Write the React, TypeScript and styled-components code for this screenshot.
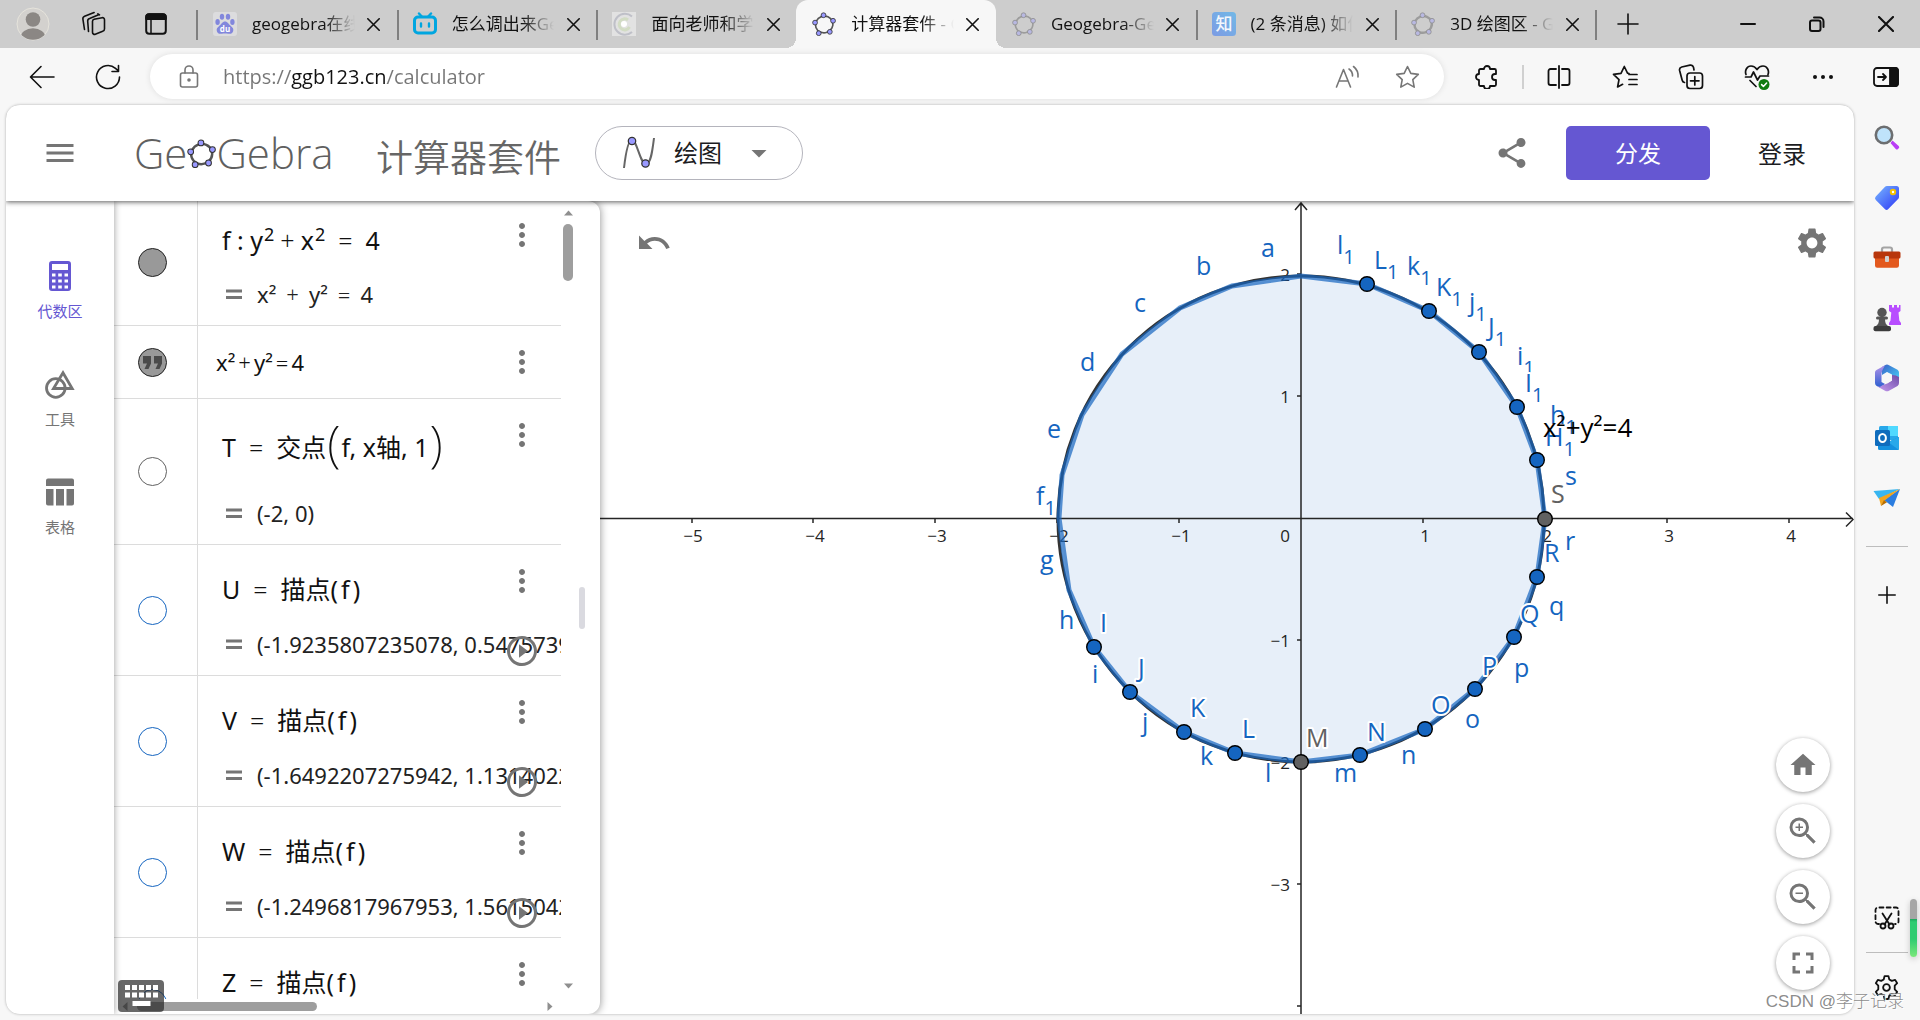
import React from "react";
import styled, { createGlobalStyle, css } from "styled-components";
import {
  MdArrowDropDown,
  MdFullscreen,
  MdHome,
  MdMenu,
  MdMoreVert,
  MdPlayCircleOutline,
  MdSettings,
  MdShare,
  MdUndo,
  MdZoomIn,
  MdZoomOut,
} from "react-icons/md";

const UI = `"Open Sans", "Noto Sans CJK SC", sans-serif`;
const MATH = `"Noto Sans", "Noto Sans CJK SC", sans-serif`;
const GREY = "#757575";
const PURPLE = "#6557d2";
const BLUE = "#1565c0";

const GlobalStyle = createGlobalStyle`
  *, *::before, *::after { box-sizing: border-box; }
  body { margin: 0; font-family: ${UI}; color: #111; background: #f7f7f7; overflow: hidden; }
  button { border: 0; padding: 0; background: none; color: inherit; font: inherit; cursor: pointer; }
  svg { display: block; flex: none; }
`;

const Window = styled.div`
  position: relative;
  display: flex;
  flex-direction: column;
  height: 100vh;
`;

const IconButton = styled.button<{ $w?: number }>`
  display: flex;
  align-items: center;
  justify-content: center;
  flex: none;
  width: ${(p) => p.$w ?? 66}px;
  height: 48px;
`;

/* ---------- tab strip ---------- */

const TabStrip = styled.header`
  display: flex;
  align-items: center;
  height: 48px;
  flex: none;
  background: #cdcdcd;
`;

const Tabs = styled.div`
  display: flex;
  flex: 0 1 1398px;
  min-width: 0;
  margin-left: 5px;
`;

const Tab = styled.div<{ $active?: boolean; $divider?: boolean; $first?: boolean }>`
  position: relative;
  display: flex;
  align-items: center;
  flex: 1 1 0;
  min-width: 0;
  height: 48px;
  padding: 0 8px 0 16px;
  ${(p) =>
    p.$first &&
    css`
      &::before {
        content: "";
        position: absolute;
        left: -1px;
        top: 10px;
        width: 2px;
        height: 30px;
        background: #808080;
      }
    `}
  ${(p) =>
    p.$divider &&
    css`
      &::after {
        content: "";
        position: absolute;
        right: -2px;
        top: 10px;
        width: 2px;
        height: 30px;
        background: #808080;
      }
    `}
  ${(p) =>
    p.$active &&
    css`
      background: #f7f7f7;
      border-radius: 12px 12px 0 0;
      &::before,
      &::after {
        content: "";
        position: absolute;
        bottom: 0;
        width: 10px;
        height: 10px;
      }
      &::before {
        right: 100%;
        background: radial-gradient(circle at 0 0, transparent 10px, #f7f7f7 10px);
      }
      &::after {
        left: 100%;
        background: radial-gradient(circle at 100% 0, transparent 10px, #f7f7f7 10px);
      }
    `}
`;

const TabTitle = styled.span`
  flex: 1;
  min-width: 0;
  margin: 0 4px 0 15px;
  overflow: hidden;
  white-space: nowrap;
  font-size: 17px;
  line-height: 26px;
  mask-image: linear-gradient(to right, #000 calc(100% - 32px), transparent);
`;

const WindowControls = styled.div`
  display: flex;
  margin-left: auto;
`;

/* ---------- address row ---------- */

const Toolbar = styled.div`
  display: flex;
  align-items: center;
  flex: none;
  height: 57px;
  padding: 0 4px 0 9px;
`;

const AddressBar = styled.label`
  display: flex;
  align-items: center;
  flex: 1;
  min-width: 0;
  height: 45px;
  margin: 0 10px 0 9px;
  padding: 0 7px 0 29px;
  border-radius: 23px;
  background: #fff;
  box-shadow: 0 0 6px rgba(0, 0, 0, 0.1);
`;

const UrlInput = styled.input`
  flex: 1;
  min-width: 0;
  height: 32px;
  margin-left: 24px;
  padding: 0;
  border: 0;
  outline: 0;
  font-family: ${UI};
  font-size: 20px;
  color: transparent;
  background: linear-gradient(to right, #767676 68px, #111 68px, #111 164px, #767676 164px);
  background-clip: text;
  -webkit-background-clip: text;
`;

const ToolDivider = styled.span`
  width: 2px;
  height: 24px;
  margin: 0 2px;
  background: #d0d0d0;
`;

/* ---------- page body ---------- */

const Main = styled.div`
  display: flex;
  flex: 1;
  min-height: 0;
`;

const Card = styled.div`
  display: flex;
  flex-direction: column;
  flex: 1;
  min-width: 0;
  margin: 0 0 6px 6px;
  border-radius: 14px;
  overflow: hidden;
  background: #fff;
  box-shadow: 0 0 3px rgba(0, 0, 0, 0.3);
`;

const AppHeader = styled.div`
  position: relative;
  z-index: 3;
  display: flex;
  align-items: center;
  flex: none;
  height: 96px;
  padding: 0 48px 0 36px;
  background: #fff;
  box-shadow: 0 1px 5px rgba(0, 0, 0, 0.65);
`;

const PlainButton = styled.button`
  flex: none;
  color: ${GREY};
`;

const Logo = styled.div`
  display: flex;
  align-items: center;
  width: 208px;
  margin: 0 34px 0 56px;
  flex: none;
  font-family: "Open Sans", sans-serif;
  font-weight: 300;
  font-size: 42px;
  line-height: 48px;
  color: #606060;
`;

const SuiteName = styled.h1`
  margin: 6px 34px 0 0;
  font-family: "Noto Sans CJK SC", sans-serif;
  font-weight: 350;
  font-size: 37px;
  line-height: 48px;
  color: #666;
  white-space: nowrap;
`;

const ModePicker = styled.label`
  position: relative;
  display: flex;
  align-items: center;
  width: 208px;
  height: 54px;
  flex: none;
  padding: 0 25px 0 26px;
  border: 1px solid #b4b4bc;
  border-radius: 27px;
  color: ${GREY};
`;

const ModeSelect = styled.select`
  appearance: none;
  flex: 1;
  min-width: 0;
  margin-left: 18px;
  padding: 0;
  border: 0;
  outline: 0;
  background: transparent;
  font-family: ${UI};
  font-size: 24px;
  line-height: 36px;
  color: #1c1c1f;
`;

const HeaderActions = styled.div`
  display: flex;
  align-items: center;
  margin-left: auto;
`;

const AssignButton = styled.button`
  width: 144px;
  height: 54px;
  margin: 0 48px 0 36px;
  padding-bottom: 2px;
  border-radius: 5px;
  background: ${PURPLE};
  color: #fff;
  font-size: 23px;
`;

const SignIn = styled.button`
  padding-bottom: 2px;
  font-size: 24px;
  color: #1c1c1f;
`;

const Workspace = styled.div`
  display: flex;
  flex: 1;
  min-height: 0;
`;

const NavRail = styled.nav`
  position: relative;
  z-index: 2;
  display: flex;
  flex-direction: column;
  flex: none;
  width: 108px;
  padding-top: 45px;
  background: #fff;
  box-shadow: 0 0 7px rgba(0, 0, 0, 0.4);
`;

const NavItem = styled.button<{ $active?: boolean }>`
  display: flex;
  flex-direction: column;
  align-items: center;
  gap: 8px;
  height: 108px;
  padding-top: 15px;
  font-size: 15px;
  line-height: 24px;
  color: ${(p) => (p.$active ? PURPLE : GREY)};
`;

/* ---------- algebra view ---------- */

const AlgebraPanel = styled.section`
  position: relative;
  z-index: 1;
  display: flex;
  flex: none;
  width: 486px;
  background: #fff;
  border-radius: 0 12px 12px 0;
  box-shadow: 0 0 8px rgba(0, 0, 0, 0.45);
`;

const ListColumn = styled.div`
  position: relative;
  display: flex;
  flex-direction: column;
  width: 447px;
`;

const ListViewport = styled.div`
  flex: 1;
  min-height: 0;
  overflow: hidden;
`;

const List = styled.div`
  margin-top: -2px;
`;

const Row = styled.div`
  position: relative;
  display: flex;
  border-bottom: 1px solid #dcdcdc;
`;

const MarkerCell = styled.div`
  display: flex;
  align-items: center;
  justify-content: center;
  flex: none;
  width: 84px;
  padding-right: 6px;
  border-right: 1px solid #dcdcdc;
`;

const Marker = styled.button<{ $fill: string; $line: string }>`
  display: flex;
  align-items: center;
  justify-content: center;
  width: 29px;
  height: 29px;
  border: 1px solid ${(p) => p.$line};
  border-radius: 50%;
  background: ${(p) => p.$fill};
`;

const Entry = styled.div<{ $top: number; $left?: number; $single?: boolean }>`
  display: flex;
  flex-direction: column;
  gap: ${(p) => (p.$top === 28 ? 23 : 22)}px;
  flex: 1;
  min-width: 0;
  overflow: hidden;
  padding: ${(p) => p.$top}px 0 ${(p) => (p.$single ? 20 : 15)}px ${(p) => p.$left ?? 24}px;
  font-family: ${MATH};
  color: #111;
  white-space: nowrap;
`;

const Formula = styled.div<{ $tall?: boolean }>`
  display: flex;
  align-items: center;
  height: ${(p) => (p.$tall ? 56 : 32)}px;
  font-size: 25px;
  line-height: 32px;
  white-space: pre;

  sup {
    font-size: 18px;
    line-height: 0;
    vertical-align: 9px;
    margin-left: 1px;
  }
`;

const Op = styled.span<{ $gap?: number }>`
  margin: 0 ${(p) => p.$gap ?? 13}px;
  font-weight: 300;
`;

const Arg = styled.span`
  margin: 0 3px;
`;

const TallParen = styled.span`
  margin: 0 1px 8px;
  font-weight: 200;
  font-size: 50px;
  line-height: 48px;
`;

const Result = styled.div`
  display: flex;
  align-items: center;
  padding-left: 4px;
  font-size: 22px;
  line-height: 32px;
  color: #222;

  svg { margin-right: 15px; }
`;

const PlainText = styled.div`
  font-size: 22px;
  line-height: 32px;
`;

const MoreButton = styled.button`
  position: absolute;
  top: 18px;
  right: 21px;
  color: ${GREY};
`;

const PlayButton = styled.button`
  position: absolute;
  bottom: 6px;
  right: 21px;
  color: ${GREY};
`;

const HScroll = styled.div`
  display: flex;
  align-items: center;
  flex: none;
  height: 15px;
  padding: 0 7px;
`;

const HThumb = styled.span`
  width: 180px;
  height: 9px;
  margin: 0 auto 0 7px;
  border-radius: 5px;
  background: #9e9e9e;
`;

const VScroll = styled.div`
  display: flex;
  flex-direction: column;
  align-items: center;
  width: 14px;
  padding: 8px 0 24px;
`;

const VThumb = styled.span`
  width: 10px;
  height: 57px;
  margin: 6px 0 auto;
  border-radius: 5px;
  background: #9e9e9e;
`;

const DragHandle = styled.span`
  align-self: center;
  width: 6px;
  height: 42px;
  margin-left: 4px;
  border-radius: 3px;
  background: #dadae0;
`;

const KeyboardButton = styled.button`
  position: absolute;
  left: 4px;
  bottom: 2px;
  display: flex;
  align-items: center;
  justify-content: center;
  width: 46px;
  height: 32px;
  border-radius: 4px;
  background: rgba(40, 40, 40, 0.7);
`;

/* ---------- graphics view ---------- */

const GraphPane = styled.section`
  position: relative;
  flex: 1;
  min-width: 0;
`;

const Plot = styled.svg`
  width: 100%;
  height: 100%;
  font-family: ${UI};
`;

const CornerButton = styled.button<{ $side: "left" | "right" }>`
  position: absolute;
  top: 24px;
  ${(p) => (p.$side === "left" ? "left: 36px" : "right: 24px")};
  color: ${GREY};
`;

const ZoomStack = styled.div`
  position: absolute;
  right: 24px;
  bottom: 24px;
  display: flex;
  flex-direction: column;
  gap: 12px;
`;

const RoundButton = styled.button`
  display: flex;
  align-items: center;
  justify-content: center;
  width: 54px;
  height: 54px;
  border-radius: 50%;
  background: #fff;
  color: ${GREY};
  box-shadow: 0 1px 4px rgba(0, 0, 0, 0.4);
`;

/* ---------- browser sidebar ---------- */

const EdgeBar = styled.aside`
  position: relative;
  display: flex;
  flex-direction: column;
  align-items: center;
  flex: none;
  width: 66px;
  padding: 3px 1px 3px 0;
`;

const EdgeItem = styled.button`
  display: flex;
  align-items: center;
  justify-content: center;
  width: 60px;
  height: 60px;
`;

const EdgeRule = styled.hr`
  width: 42px;
  height: 1px;
  margin: 18px 0;
  border: 0;
  background: #bdbdbd;
`;

const EdgeBottom = styled.div`
  display: flex;
  flex-direction: column;
  align-items: center;
  margin-top: auto;

  hr { margin: 4px 0; }
`;

const Meter = styled.span`
  position: absolute;
  right: 3px;
  bottom: 63px;
  width: 7px;
  height: 58px;
  border-radius: 4px;
  background: linear-gradient(#a6a6a6 20px, #1aa85c 20px, #2ecc71 23px, #2ecc71 40px, #7be87b);
  box-shadow: 0 2px 6px rgba(0, 0, 0, 0.2);
`;

const Watermark = styled.span`
  position: absolute;
  right: 16px;
  bottom: 6px;
  z-index: 5;
  font-family: "Liberation Sans", "Noto Sans CJK SC", sans-serif;
  font-weight: 300;
  font-size: 17px;
  line-height: 24px;
  color: rgba(125, 125, 125, 0.9);
  text-shadow: 1px 1px 0 #fff;
  pointer-events: none;
`;

/* ---------- icons ---------- */

const line = { fill: "none", stroke: "currentColor", strokeWidth: 1.6, strokeLinecap: "round", strokeLinejoin: "round" } as const;

const GgbIcon = ({ size = 26, faded = false, w = 1.8 }: { size?: number; faded?: boolean; w?: number }) => (
  <svg width={size} height={size} viewBox="0 0 26 26" opacity={faded ? 0.4 : 1}>
    <ellipse cx="13" cy="13.5" rx="9.5" ry="9" fill="none" stroke="#555" strokeWidth={w} transform="rotate(-20 13 13)" />
    {[[12.5, 3.5], [22.8, 9.5], [19.3, 21.5], [7.3, 23], [3.3, 11.5]].map(([x, y]) => (
      <circle key={x} cx={x} cy={y} r="2.6" fill="#9999ff" stroke="#333" strokeWidth="0.9" />
    ))}
  </svg>
);

const BaiduIcon = () => (
  <svg width="24" height="24" viewBox="0 0 24 24">
    <rect width="24" height="24" rx="3" fill="#dcdcde" />
    <g fill="#8287dc">
      <ellipse cx="4.6" cy="10" rx="2.2" ry="2.9" />
      <ellipse cx="9" cy="4.8" rx="2.2" ry="3" />
      <ellipse cx="15" cy="4.8" rx="2.2" ry="3" />
      <ellipse cx="19.4" cy="10" rx="2.2" ry="2.9" />
      <path d="M12 9.5c2.6 0 3.6 2.6 5.600 4.300 2.400 2 3 3.200 2.600 5.200-.5 2.600-2.800 3-5 2.700-2.200-.3-4.200-.3-6.400 0-2.200.3-4.500-.1-5-2.700-.4-2 .2-3.200 2.600-5.200C8.400 12.100 9.400 9.500 12 9.500z" />
    </g>
    <text x="12" y="20" fontSize="8" fontWeight="700" textAnchor="middle" fill="#fff" fontFamily="Open Sans">du</text>
  </svg>
);

const BiliIcon = () => (
  <svg width="24" height="24" viewBox="0 0 24 24" fill="none" stroke="#00a6e0" strokeLinecap="round">
    <rect x="1.500" y="5" width="21" height="16" rx="3.500" strokeWidth="3" />
    <path d="M6 1.500l3 3.300M18 1.500l-3 3.300M8 11.500v3M16 11.500v3" strokeWidth="2.400" />
  </svg>
);

const SwirlIcon = () => (
  <svg width="24" height="24" viewBox="0 0 24 24" fill="none">
    <rect width="24" height="24" fill="#e2e2e2" />
    <path d="M20 4.500A10.500 10.500 0 1 0 20 20" stroke="#bfc0c8" strokeWidth="2" />
    <path d="M16 8a5.500 5.500 0 1 0 1.500 7" stroke="#d2dcc4" strokeWidth="3" />
    <circle cx="12" cy="12" r="3" fill="#fff" />
  </svg>
);

const ZhihuIcon = () => (
  <svg width="24" height="24" viewBox="0 0 24 24">
    <defs>
      <linearGradient id="zhihu" x1="0" y1="1" x2="1" y2="0">
        <stop offset="0" stopColor="#7c9be4" />
        <stop offset="1" stopColor="#72b8e6" />
      </linearGradient>
    </defs>
    <rect width="24" height="24" rx="3.500" fill="url(#zhihu)" />
    <text x="12" y="18" fontSize="17" fontWeight="500" textAnchor="middle" fill="#f4f7fc" fontFamily="Noto Sans CJK SC">知</text>
  </svg>
);

const CloseIcon = ({ size = 13, w = 1.6 }: { size?: number; w?: number }) => (
  <svg width={size} height={size} viewBox="0 0 13 13" {...line} strokeWidth={w}>
    <path d="M.8.8l11.400 11.400M12.200.8L.8 12.200" />
  </svg>
);

const ProfileIcon = () => (
  <svg width="34" height="34" viewBox="0 0 34 34">
    <defs><clipPath id="face"><circle cx="17" cy="17" r="15.800" /></clipPath></defs>
    <circle cx="17" cy="17" r="16" fill="#d3d1ce" stroke="#e6e4dc" />
    <g fill="#8b8784" clipPath="url(#face)">
      <circle cx="17" cy="12.500" r="7.300" />
      <ellipse cx="17" cy="31" rx="12.500" ry="9.800" />
    </g>
  </svg>
);

const WorkspacesIcon = () => (
  <svg width="26" height="26" viewBox="0 0 26 26" {...line}>
    <path d="M12.500 10.200a2 2 0 0 1 1.600-1.900l8-1.600a2 2 0 0 1 2.400 2V18a2.500 2.500 0 0 1-1.800 2.300l-7.400 2.900a2 2 0 0 1-2.800-1.900z" />
    <path d="M8.500 20.500l-.8-10.300c-.1-1.500.6-2.400 1.900-2.800l9-3.600M4.500 18.500L2.900 8.200c-.2-1.400.5-2.400 1.700-2.900l9.500-3.800M19.500 3.900L17.900 2.800" />
  </svg>
);

const VerticalTabsIcon = () => (
  <svg width="22" height="22" viewBox="0 0 22 22" {...line} strokeWidth={2}>
    <rect x="1.200" y="1.200" width="19.600" height="19.600" rx="3" />
    <path d="M1.200 4a3 3 0 0 1 3-2.800h13.600a3 3 0 0 1 3 2.800v2H1.200z" fill="currentColor" />
    <path d="M6 7v13" strokeWidth={1.500} />
  </svg>
);

const CalculatorIcon = () => (
  <svg width="22" height="30" viewBox="0 0 22 30" fill="currentColor">
    <path fillRule="evenodd" d="M3 0h16a3 3 0 0 1 3 3v24a3 3 0 0 1-3 3H3a3 3 0 0 1-3-3V3a3 3 0 0 1 3-3zm0 3v6h16V3zM3 12.500v3h3.500v-3zm6.200 0v3h3.600v-3zm6.300 0v3H19v-3zM3 18.500v3h3.500v-3zm6.200 0v3h3.600v-3zm6.300 0v3H19v-3zM3 24.500v3h3.500v-3zm6.200 0v3h3.600v-3zm6.300 0v3H19v-3z" />
  </svg>
);

const ToolsIcon = () => (
  <svg width="30" height="30" viewBox="0 0 30 30" fill="none" stroke="currentColor" strokeWidth="2.800">
    <circle cx="10.800" cy="19" r="9.300" />
    <path d="M18 3.800L8.500 19.500h18.700z" />
  </svg>
);

const TableIcon = () => (
  <svg width="30" height="30" viewBox="0 0 30 30" fill="currentColor">
    <path d="M3 1.500h24a2 2 0 0 1 2 2V9H1V3.500a2 2 0 0 1 2-2zM1 12h7.500v16.500H3a2 2 0 0 1-2-2zM11 12h8v16.500h-8zM21.500 12H29v14.500a2 2 0 0 1-2 2h-5.500z" />
  </svg>
);

const EqualsIcon = () => (
  <svg width="16" height="12" viewBox="0 0 16 12" fill={GREY}>
    <path d="M0 1.500h16v3H0zM0 8h16v3H0z" />
  </svg>
);

const QuoteIcon = () => (
  <svg width="19" height="13" viewBox="0 0 19 13" fill="#4a4a4a">
    <path d="M0 0h8v7.500L5.500 13h-4L4 7.500H0zM11 0h8v7.500L16.500 13h-4L15 7.500h-4z" />
  </svg>
);

const KeyboardIcon = () => (
  <svg width="33" height="22" viewBox="0 0 33 22" fill="#fff">
    {[0, 7, 14, 21, 28].map((x) => (
      <React.Fragment key={x}>
        <rect x={x} y="0" width="5" height="5" />
        <rect x={x} y="7.500" width="5" height="5" />
      </React.Fragment>
    ))}
    <rect x="7.500" y="16" width="18" height="5" />
  </svg>
);

const Caret = ({ d }: { d: string }) => (
  <svg width="9" height="9" viewBox="0 0 9 9" fill="#8f8f8f">
    <path d={d} />
  </svg>
);

const EdgeSearch = () => (
  <svg width="26" height="26" viewBox="0 0 26 26">
    <path d="M16.500 18l2-2.500 6.200 5.500a1.600 1.600 0 0 1 0 2.300l-.7.7a1.600 1.600 0 0 1-2.300 0z" fill="#b93df5" />
    <circle cx="10" cy="10" r="8.200" fill="#bfe3fb" stroke="#6c6e70" strokeWidth="2.600" />
  </svg>
);

const EdgeTag = () => (
  <svg width="26" height="26" viewBox="0 0 26 26">
    <defs><linearGradient id="tag" x1="0" y1="0" x2="1" y2="1"><stop offset="0" stopColor="#79b8ff" /><stop offset="1" stopColor="#2b35f5" /></linearGradient></defs>
    <path d="M13 1h9.500A2.500 2.500 0 0 1 25 3.500V12a3 3 0 0 1-.9 2.100l-9.800 10a2.500 2.500 0 0 1-3.500 0l-9-9a2.500 2.500 0 0 1 0-3.500l9-9.600A3 3 0 0 1 13 1z" fill="url(#tag)" />
    <circle cx="19" cy="7" r="2.200" fill="#fff" stroke="#f5c100" strokeWidth="2" />
  </svg>
);

const EdgeToolbox = () => (
  <svg width="28" height="24" viewBox="0 1 28 24">
    <path d="M9 7V4.500A2 2 0 0 1 11 2.500h6a2 2 0 0 1 2 2V7" fill="none" stroke="#a4a4a4" strokeWidth="2.200" />
    <path d="M2 12h24v8.500a2.200 2.200 0 0 1-2.200 2.200H4.200A2.200 2.200 0 0 1 2 20.500z" fill="#e3591e" />
    <rect x="0.500" y="6.500" width="27" height="7" rx="1.500" fill="#b8360c" />
    <rect x="12" y="11" width="4" height="6" rx="1" fill="#d0d0d0" />
  </svg>
);

const EdgeGames = () => (
  <svg width="28" height="28" viewBox="0 0 28 28">
    <path d="M16 1h3v2.500h2V1h3v2.500h2V1h1.500v6l-2 1.500.8 8 1.700 2.500v2H16v-2l1.500-2.500.8-8L16 7z" fill="#b84dff" />
    <g fill="#555">
      <circle cx="9" cy="8.500" r="4.700" />
      <rect x="3" y="12.500" width="12" height="3" rx="1.500" />
      <path d="M6 15h6c0 4 1 5.500 3 7H3c2-1.500 3-3 3-7z" />
      <rect x="0.500" y="22" width="17.500" height="5.200" rx="2" fill="#3c3c3c" />
    </g>
  </svg>
);

const Edge365 = () => (
  <svg width="26" height="28" viewBox="0 0 26 28">
    <defs>
      <linearGradient id="m1" x1="0" y1="0" x2="1" y2="1"><stop offset="0" stopColor="#3a62c8" /><stop offset="1" stopColor="#46d0f7" /></linearGradient>
      <linearGradient id="m2" x1="0" y1="0" x2="0" y2="1"><stop offset="0" stopColor="#b493e8" /><stop offset="1" stopColor="#2b5fd0" /></linearGradient>
      <linearGradient id="m3" x1="0" y1="1" x2="1" y2="0"><stop offset="0" stopColor="#c79cf0" /><stop offset="1" stopColor="#6e4ca8" /></linearGradient>
    </defs>
    <path d="M8 3l3-1.800Q13 0 15 1.200l8.500 4.600q1.500.9 1.500 2.700V16l-7-1.500v-4L13 8l-5 3z" fill="url(#m1)" />
    <path d="M11 1.200L2.500 6Q1 6.900 1 8.600V19q0 2 1.700 2.900L6 23.500l5-3.500-3.500-2V9.500Q8 6 11 1.200z" fill="url(#m2)" />
    <path d="M25 13v6q0 2-1.500 2.900L15 26.700q-2 1.200-4 0L3 22.300Q6 23.500 8 21.500l5-2 5-3V11q4 0 7 2z" fill="url(#m3)" />
    <path d="M13 8.500l5 3v5l-5 3-5-3v-5z" fill="#f7f7f7" />
  </svg>
);

const EdgeOutlook = () => (
  <svg width="26" height="26" viewBox="0 0 26 26">
    <rect x="5" y="1" width="19" height="14" rx="1.500" fill="#28a8ea" />
    <path d="M14 1h10v10H14z" fill="#50d9ff" />
    <path d="M4 12l10 5 11-5v11.500a1.500 1.500 0 0 1-1.500 1.500h-18A1.500 1.500 0 0 1 4 23.500z" fill="#1490df" />
    <path d="M14 17l11 8V12z" fill="#28a8ea" />
    <rect x="1" y="5" width="15" height="16" rx="1.500" fill="#0f6cbd" />
    <ellipse cx="8.500" cy="13" rx="3.400" ry="4" fill="none" stroke="#fff" strokeWidth="2" />
  </svg>
);

const EdgeDrop = () => (
  <svg width="28" height="24" viewBox="0 0 28 24">
    <path d="M.5 5L27 3 6 13z" fill="#38b6f0" />
    <path d="M27 3L20 21l-9-7z" fill="#2b7de0" />
    <path d="M27 3L6 12l2 8 3.500-5.500z" fill="#f2a51c" />
    <path d="M8 20l3-6 3 2.300z" fill="#b86e00" />
  </svg>
);

/* ---------- data ---------- */

const tabs = [
  { title: "geogebra在线", icon: <BaiduIcon />, divider: true },
  { title: "怎么调出来Ge", icon: <BiliIcon />, divider: true },
  { title: "面向老师和学生", icon: <SwirlIcon /> },
  { title: "计算器套件 - G", icon: <GgbIcon size={24} />, active: true },
  { title: "Geogebra-Geo", icon: <GgbIcon size={24} faded />, divider: true },
  { title: "(2 条消息) 如何", icon: <ZhihuIcon />, divider: true },
  { title: "3D 绘图区 - G", icon: <GgbIcon size={24} faded w={2.6} />, divider: true },
];

const samples = [
  { name: "U", value: "(-1.9235807235078, 0.5475739" },
  { name: "V", value: "(-1.6492207275942, 1.1314022" },
  { name: "W", value: "(-1.2496817967953, 1.5615042" },
  { name: "Z", value: "(-0.7653668647301, 1.8477590" },
];

/* Canvas coordinates: the origin of the plane and the length of one unit. */
const OX = 701;
const OY = 317;
const UNIT = 122;
const gx = (x: number) => x - 600;
const gy = (y: number) => y - 201;

const points: [number, number, string?][] = [
  [1367, 284], [1429, 311], [1479, 352], [1517, 407], [1537, 460], [1545, 519, "#616161"],
  [1537, 577], [1514, 637], [1475, 689], [1425, 729], [1360, 755], [1301, 762, "#616161"],
  [1235, 753], [1184, 732], [1130, 692], [1094, 647],
];
const hiddenVertices = [
  [1069, 590], [1059, 518], [1062, 475], [1082, 415], [1122, 354], [1180, 308], [1232, 286], [1301, 276],
];
const outline = [...points.map(([x, y]) => [x, y]), ...hiddenVertices]
  .map(([x, y]) => `${gx(x)},${gy(y)}`)
  .join(" ");

const labels: [string, number, number, string?][] = [
  ["a", 1261, 257], ["b", 1196, 275], ["c", 1134, 312], ["d", 1080, 371], ["e", 1047, 438],
  ["f", 1036, 505, "1"], ["l", 1337, 254, "1"], ["L", 1374, 269, "1"], ["k", 1407, 275, "1"],
  ["K", 1436, 296, "1"], ["j", 1469, 311, "1"], ["J", 1488, 336, "1"], ["i", 1517, 365, "1"],
  ["I", 1525, 392, "1"], ["h", 1550, 424, "1"], ["H", 1545, 446, "1"], ["s", 1565, 485],
  ["r", 1565, 550], ["R", 1544, 562], ["q", 1549, 615], ["Q", 1520, 623], ["p", 1514, 677],
  ["P", 1482, 675], ["o", 1465, 728], ["O", 1431, 714], ["n", 1401, 764], ["N", 1367, 741],
  ["m", 1334, 782], ["l", 1265, 782], ["L", 1242, 738], ["k", 1200, 765], ["K", 1190, 717],
  ["j", 1142, 731], ["J", 1138, 677], ["i", 1092, 683], ["I", 1100, 632], ["h", 1059, 629], ["g", 1040, 569],
];

function Graph() {
  return (
    <Plot viewBox="0 0 1254 813" role="img" aria-label="绘图区">
      <polygon points={outline} fill={BLUE} fillOpacity="0.1" />
      <g stroke="#252525" strokeWidth="1.500" fill="none">
        <path d={`M0 ${OY}.5H1253M1246 ${OY - 6}.500l7 7-7 7`} />
        <path d={`M${OX} 813V3M${OX - 6} 9l6-7 6 7`} />
        {[-5, -4, -3, -2, -1, 1, 2, 3, 4].map((n) => (
          <path key={n} d={`M${OX + n * UNIT - (n === -5 ? -1 : 0)} ${OY}v5`} />
        ))}
        {[-4, -3, -2, -1, 1, 2].map((n) => (
          <path key={n} d={`M${OX} ${OY - n * UNIT}h-4`} />
        ))}
      </g>
      <g fontSize="17" fill="#252525">
        {[-5, -4, -3, -2, -1, 1, 2, 3, 4].map((n) => (
          <text key={n} x={OX + 2 + n * UNIT} y="341" textAnchor="middle">{String(n).replace("-", "−")}</text>
        ))}
        {[-3, -2, -1, 1, 2].map((n) => (
          <text key={n} x="690" y={OY + 7 - n * UNIT} textAnchor="end">{String(n).replace("-", "−")}</text>
        ))}
        <text x="690" y="341" textAnchor="end">0</text>
      </g>
      <circle cx={OX} cy={OY + 1} r="243" fill="none" stroke="#333" strokeWidth="3" />
      <polygon points={outline} fill="none" stroke={BLUE} strokeOpacity="0.7" strokeWidth="5" />
      {points.map(([x, y, fill]) => (
        <circle key={`${x}-${y}`} cx={gx(x)} cy={gy(y)} r="7.300" fill={fill ?? BLUE} stroke="#000" strokeWidth="1.400" />
      ))}
      <g fontSize="25" stroke="#fff" strokeWidth="4" strokeLinejoin="round" paintOrder="stroke" fill={BLUE}>
        {labels.map(([t, x, y, sub]) => (
          <text key={`${t}${x}`} x={gx(x)} y={gy(y)}>
            {t}
            {sub && <tspan dy="10" fontSize="20">{sub}</tspan>}
          </text>
        ))}
        <text x={gx(1551)} y={gy(503)} fill="#616161">S</text>
        <text x={gx(1306)} y={gy(747)} fill="#616161">M</text>
      </g>
      <text x={gx(1543)} y={gy(437)} fontSize="26" fill="#000">x²+y²=4</text>
    </Plot>
  );
}

/* ---------- page ---------- */

function RowShell({ fill = "#fff", line: edge = BLUE, mark, play, children }: {
  fill?: string;
  line?: string;
  mark?: React.ReactNode;
  play?: boolean;
  children: React.ReactNode;
}) {
  return (
    <Row>
      <MarkerCell>
        <Marker $fill={fill} $line={edge} aria-label="显示或隐藏">{mark}</Marker>
      </MarkerCell>
      {children}
      <MoreButton aria-label="更多"><MdMoreVert size={36} /></MoreButton>
      {play && <PlayButton aria-label="播放"><MdPlayCircleOutline size={36} /></PlayButton>}
    </Row>
  );
}

export default function App() {
  return (
    <Window>
      <GlobalStyle />
      <TabStrip>
        <IconButton aria-label="个人资料"><ProfileIcon /></IconButton>
        <IconButton $w={54} aria-label="工作区"><WorkspacesIcon /></IconButton>
        <IconButton $w={72} aria-label="标签页操作"><VerticalTabsIcon /></IconButton>
        <Tabs>
          {tabs.map((t, i) => (
            <Tab key={t.title} $active={t.active} $divider={t.divider} $first={i === 0}>
              {t.icon}
              <TabTitle>{t.title}</TabTitle>
              <IconButton $w={30} aria-label="关闭标签页"><CloseIcon /></IconButton>
            </Tab>
          ))}
        </Tabs>
        <IconButton $w={66} aria-label="新建标签页">
          <svg width="22" height="22" viewBox="0 0 22 22" {...line}><path d="M11 1v20M1 11h20" /></svg>
        </IconButton>
        <WindowControls>
          <IconButton $w={69} aria-label="最小化">
            <svg width="16" height="16" viewBox="0 0 16 16" {...line} strokeWidth={2}><path d="M1 8h14" /></svg>
          </IconButton>
          <IconButton $w={69} aria-label="还原">
            <svg width="16" height="16" viewBox="0 0 16 16" {...line} strokeWidth={2}>
              <rect x="1" y="4.500" width="10.500" height="10.500" rx="2" />
              <path d="M5 1.500h5.500a4 4 0 0 1 4 4V11" />
            </svg>
          </IconButton>
          <IconButton $w={69} aria-label="关闭"><CloseIcon size={16} w={1.7} /></IconButton>
        </WindowControls>
      </TabStrip>

      <Toolbar>
        <IconButton aria-label="返回">
          <svg width="26" height="26" viewBox="0 0 26 26" {...line}><path d="M25 13H2M12 2.500L1.500 13 12 23.500" /></svg>
        </IconButton>
        <IconButton aria-label="刷新">
          <svg width="26" height="26" viewBox="0 0 26 26" {...line}><path d="M24.500 13A11.500 11.500 0 1 1 20.500 4.300L23.500 7M23.500 1.500V7.500H17" /></svg>
        </IconButton>
        <AddressBar>
          <svg width="20" height="24" viewBox="0 0 20 24" {...line} stroke="#767676">
            <rect x="1.500" y="8" width="17" height="14" rx="2" />
            <path d="M6 8V5a4 4 0 0 1 8 0v3" />
            <circle cx="10" cy="15" r="1" fill="#767676" />
          </svg>
          <UrlInput aria-label="地址" defaultValue="https://ggb123.cn/calculator" />
          <IconButton $w={60} type="button" aria-label="朗读此页内容">
            <svg width="25" height="24" viewBox="0 0 25 24" {...line} stroke="#767676">
              <path d="M1.500 22L8.500 4.500 15.500 22M4 16h9M14 4a8 8 0 0 1 3.500 7M18.500 1.500A12 12 0 0 1 23 12" />
            </svg>
          </IconButton>
          <IconButton $w={60} type="button" aria-label="收藏">
            <svg width="25" height="24" viewBox="0 0 25 24" {...line} stroke="#767676">
              <path d="M12.500 1.500l3.300 6.900 7.500 1-5.500 5.200 1.400 7.500-6.700-3.700-6.700 3.700 1.400-7.500-5.500-5.200 7.500-1z" />
            </svg>
          </IconButton>
        </AddressBar>
        <IconButton aria-label="扩展">
          <svg width="24" height="24" viewBox="0 0 24 24" {...line} strokeWidth={1.8}>
            <path d="M9 4a3 3 0 0 1 6 0h4.500A1.500 1.500 0 0 1 21 5.500V9h-1a3 3 0 0 0 0 6h1v4.500a1.500 1.500 0 0 1-1.500 1.500H15a3 3 0 0 1-6 0H5.500A1.500 1.500 0 0 1 4 19.500V15a3 3 0 0 1 0-6V5.500A1.500 1.500 0 0 1 5.500 4z" />
          </svg>
        </IconButton>
        <ToolDivider />
        <IconButton aria-label="分屏">
          <svg width="24" height="24" viewBox="0 0 24 24" {...line} strokeWidth={1.8}>
            <path d="M12 1v22M9 4H3.500A2 2 0 0 0 1.500 6v12a2 2 0 0 0 2 2H9M15 4h5.500a2 2 0 0 1 2 2v12a2 2 0 0 1-2 2H15" />
          </svg>
        </IconButton>
        <IconButton aria-label="收藏夹">
          <svg width="26" height="24" viewBox="0 0 26 24" {...line} strokeWidth={1.700}>
            <path d="M17 8.500l-1.500-.4L12.300 1.500 9 8.400l-7.500 1L7 14.600 5.600 22l5-2.700M17 9.500h8M17 14.500h8M17 19.500h8" />
          </svg>
        </IconButton>
        <IconButton aria-label="集锦">
          <svg width="26" height="26" viewBox="0 0 26 26" {...line} strokeWidth={1.700}>
            <rect x="9" y="9" width="15.500" height="15.500" rx="3" />
            <path d="M16.800 12.500v8.500M12.500 16.800H21M6.500 18.500a3 3 0 0 1-2.300-2.300L1.600 6.500A3 3 0 0 1 3.700 3L12 1.200a3 3 0 0 1 3.500 2.100L16 6" />
          </svg>
        </IconButton>
        <IconButton aria-label="浏览器概要">
          <svg width="26" height="26" viewBox="0 0 26 26" {...line} strokeWidth={1.700}>
            <path d="M2 10.500C.5 6.500 3 2 7 2c2.500 0 4.500 1.200 6 3.500C14.500 3.200 16.500 2 19 2c4 0 6.500 4.500 5 8.500M1.500 13H7l2.500-5 4 8 2.500-4h8.500M6 16.500l6 6" />
            <circle cx="20" cy="20.500" r="5.500" fill="#107c10" stroke="none" />
            <path d="M17.600 20.600l1.800 1.800 3.200-3.400" stroke="#fff" strokeWidth="1.500" />
          </svg>
        </IconButton>
        <IconButton aria-label="设置及其他">
          <svg width="22" height="6" viewBox="0 0 22 6" fill="currentColor"><circle cx="3" cy="3" r="2" /><circle cx="11" cy="3" r="2" /><circle cx="19" cy="3" r="2" /></svg>
        </IconButton>
        <IconButton $w={60} aria-label="边栏">
          <svg width="26" height="20" viewBox="0 0 26 20" {...line} strokeWidth={1.800}>
            <rect x="1" y="1" width="24" height="18" rx="3" />
            <path d="M17 1h5a3 3 0 0 1 3 3v12a3 3 0 0 1-3 3h-5z" fill="currentColor" />
            <path d="M5 10h8M10 7l3 3-3 3" />
          </svg>
        </IconButton>
      </Toolbar>

      <Main>
        <Card>
          <AppHeader>
            <PlainButton aria-label="菜单"><MdMenu size={36} /></PlainButton>
            <Logo>Ge<GgbIcon size={29} w={2.2} />Gebra</Logo>
            <SuiteName>计算器套件</SuiteName>
            <ModePicker>
              <svg width="34" height="36" viewBox="0 0 34 36" fill="none" stroke="#666" strokeWidth="2">
                <path d="M2 33C3.500 20 6 5 10 5c5 0 8 24 14 24 5 0 6.500-14 8-26" />
                <circle cx="10" cy="6" r="3.700" fill="#9999ff" stroke="#333" strokeWidth="1.300" />
                <circle cx="23.500" cy="28.500" r="3.700" fill="#9999ff" stroke="#333" strokeWidth="1.300" />
              </svg>
              <ModeSelect aria-label="应用" defaultValue="graphing">
                <option value="graphing">绘图</option>
              </ModeSelect>
              <MdArrowDropDown size={36} />
            </ModePicker>
            <HeaderActions>
              <PlainButton aria-label="分享"><MdShare size={36} /></PlainButton>
              <AssignButton>分发</AssignButton>
              <SignIn>登录</SignIn>
            </HeaderActions>
          </AppHeader>

          <Workspace>
            <NavRail>
              <NavItem $active><CalculatorIcon />代数区</NavItem>
              <NavItem><ToolsIcon />工具</NavItem>
              <NavItem><TableIcon />表格</NavItem>
            </NavRail>

            <AlgebraPanel>
              <ListColumn>
                <ListViewport>
                  <List>
                    <RowShell fill="#999" line="#222">
                      <Entry $top={25}>
                        <Formula>
                          <span>f : y<sup>2</sup></span><Op $gap={6}>+</Op><span>x<sup>2</sup></span><Op>=</Op>4
                        </Formula>
                        <Result><EqualsIcon />x²<Op $gap={10}>+</Op>y²<Op $gap={10}>=</Op>4</Result>
                      </Entry>
                    </RowShell>
                    <RowShell fill="#999" line="#222" mark={<QuoteIcon />}>
                      <Entry $top={20} $left={18} $single>
                        <PlainText>x²<Op $gap={3}>+</Op>y²<Op $gap={3}>=</Op>4</PlainText>
                      </Entry>
                    </RowShell>
                    <RowShell line="#616161">
                      <Entry $top={20}>
                        <Formula $tall>
                          T<Op>=</Op>交点<TallParen>(</TallParen>f, x轴, 1<TallParen>)</TallParen>
                        </Formula>
                        <Result><EqualsIcon />(-2, 0)</Result>
                      </Entry>
                    </RowShell>
                    {samples.map((s) => (
                      <RowShell key={s.name} play>
                        <Entry $top={28}>
                          <Formula>{s.name}<Op>=</Op>描点(<Arg>f</Arg>)</Formula>
                          <Result><EqualsIcon />{s.value}</Result>
                        </Entry>
                      </RowShell>
                    ))}
                  </List>
                </ListViewport>
                <HScroll>
                  <Caret d="M6.500 0v9L1.500 4.500z" />
                  <HThumb />
                  <Caret d="M2.500 0v9l5-4.500z" />
                </HScroll>
                <KeyboardButton aria-label="打开键盘"><KeyboardIcon /></KeyboardButton>
              </ListColumn>
              <VScroll>
                <Caret d="M0 6.500h9L4.500 1.500z" />
                <VThumb />
                <Caret d="M0 2.500h9l-4.500 5z" />
              </VScroll>
              <DragHandle />
            </AlgebraPanel>

            <GraphPane>
              <Graph />
              <CornerButton $side="left" aria-label="撤销"><MdUndo size={36} /></CornerButton>
              <CornerButton $side="right" aria-label="设置"><MdSettings size={36} /></CornerButton>
              <ZoomStack>
                <RoundButton aria-label="标准视图"><MdHome size={30} /></RoundButton>
                <RoundButton aria-label="放大"><MdZoomIn size={36} /></RoundButton>
                <RoundButton aria-label="缩小"><MdZoomOut size={36} /></RoundButton>
                <RoundButton aria-label="全屏"><MdFullscreen size={36} /></RoundButton>
              </ZoomStack>
            </GraphPane>
          </Workspace>
        </Card>

        <EdgeBar>
          <EdgeItem aria-label="搜索"><EdgeSearch /></EdgeItem>
          <EdgeItem aria-label="购物"><EdgeTag /></EdgeItem>
          <EdgeItem aria-label="工具"><EdgeToolbox /></EdgeItem>
          <EdgeItem aria-label="游戏"><EdgeGames /></EdgeItem>
          <EdgeItem aria-label="Microsoft 365"><Edge365 /></EdgeItem>
          <EdgeItem aria-label="Outlook"><EdgeOutlook /></EdgeItem>
          <EdgeItem aria-label="Drop"><EdgeDrop /></EdgeItem>
          <EdgeRule />
          <EdgeItem aria-label="自定义">
            <svg width="18" height="18" viewBox="0 0 18 18" {...line}><path d="M9 .8v16.400M.8 9h16.400" /></svg>
          </EdgeItem>
          <EdgeBottom>
            <EdgeItem aria-label="屏幕截图">
              <svg width="26" height="24" viewBox="0 0 26 24" {...line} strokeWidth={1.800}>
                <path d="M5 18H4a2.500 2.500 0 0 1-2.500-2.500V4A2.500 2.500 0 0 1 4 1.500h18A2.500 2.500 0 0 1 24.500 4v11.500A2.500 2.500 0 0 1 22 18h-1" strokeDasharray="4 3.200" />
                <path d="M8.500 7.500l7 11M17.500 7.500l-7 11" />
                <circle cx="9" cy="20" r="2.500" /><circle cx="17" cy="20" r="2.500" />
              </svg>
            </EdgeItem>
            <EdgeRule />
            <EdgeItem aria-label="边栏设置">
              <svg width="27" height="27" viewBox="0 0 24 24" {...line}>
                <circle cx="12" cy="12" r="3" />
                <path d="M10.300 1.800h3.400l.8 3 2.200 1.300 3-.9 1.800 3-2.200 2.200v3.200l2.200 2.200-1.800 3-3-.9-2.200 1.300-.8 3h-3.400l-.8-3-2.200-1.300-3 .9-1.800-3 2.200-2.200v-3.200L2.500 8.200l1.800-3 3 .9 2.200-1.300z" />
              </svg>
            </EdgeItem>
          </EdgeBottom>
          <Meter />
        </EdgeBar>
      </Main>
      <Watermark>CSDN @李子记录</Watermark>
    </Window>
  );
}
